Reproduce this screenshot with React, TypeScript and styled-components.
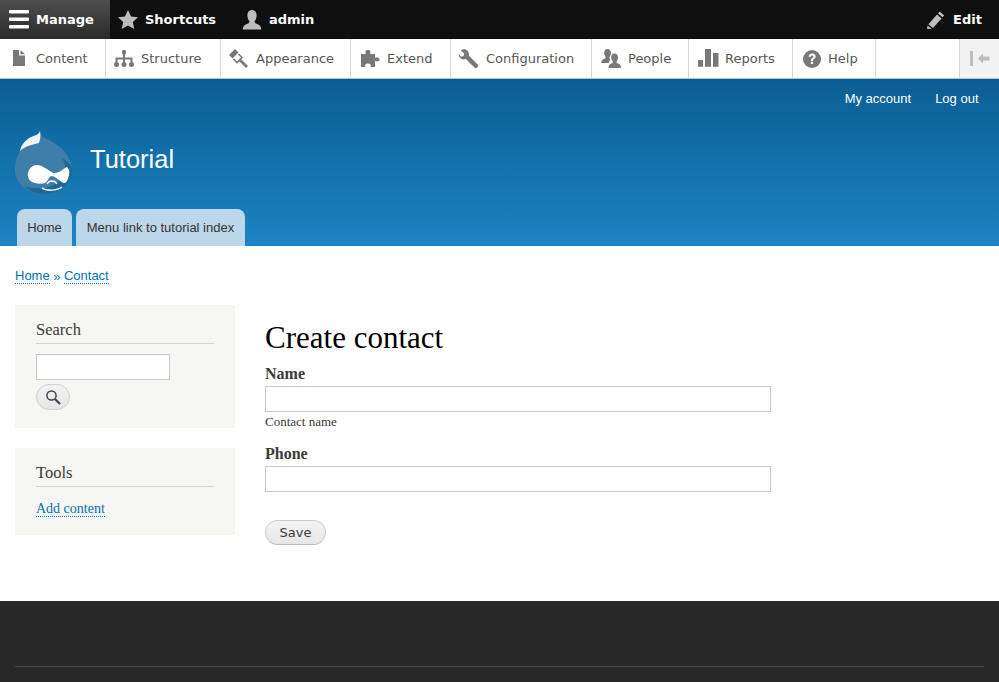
import styled, { createGlobalStyle } from "styled-components";

const GlobalStyle = createGlobalStyle`
    html, body { margin: 0; padding: 0; background: #fff; }
    * { box-sizing: border-box; }
`;

const uiFont = `"DejaVu Sans", sans-serif`;
const headerFont = `"Liberation Sans", Arial, sans-serif`;
const bodyFont = `"Liberation Serif", "Times New Roman", serif`;

const Page = styled.div`
    width: 999px;
    height: 682px;
    overflow: hidden;
    display: flex;
    flex-direction: column;
`;

/* 黒いツールバー */
const TopBar = styled.div`
    height: 39px;
    background: #0f0f0f;
    display: flex;
    align-items: stretch;
`;

const TopItem = styled.a<{ $active?: boolean; $width: number }>`
    width: ${(p) => p.$width}px;
    display: flex;
    align-items: center;
    gap: 7px;
    padding-left: ${(p) => (p.$active ? 9 : 8)}px;
    color: #fff;
    font: bold 13px ${uiFont};
    background: ${(p) => (p.$active ? "linear-gradient(to bottom, #4e4e4e, #2a2a2a)" : "transparent")};
`;

const TopEdit = styled(TopItem)`
    margin-left: auto;
    padding-left: 0;
    gap: 8px;
`;

const Tray = styled.div`
    height: 40px;
    background: #fff;
    border-bottom: 1px solid #bfbfbf;
    display: flex;
    align-items: stretch;
`;

const TrayItem = styled.a<{ $width: number; $gap?: number }>`
    width: ${(p) => p.$width}px;
    display: flex;
    align-items: center;
    gap: ${(p) => p.$gap ?? 7}px;
    padding-left: 8px;
    border-right: 1px solid #d9d9d9;
    color: #565656;
    font: 13px ${uiFont};
`;

const TrayToggle = styled.div`
    margin-left: auto;
    width: 40px;
    background: #f2f2f2;
    border-left: 1px solid #d9d9d9;
    display: flex;
    align-items: center;
    justify-content: center;
`;

/* サイトヘッダー */
const Header = styled.header`
    height: 167px;
    background: linear-gradient(to bottom, #0a5d93, #1d84c3);
    display: flex;
    flex-direction: column;
    font-family: ${headerFont};
`;

const SecondaryMenu = styled.nav`
    height: 38px;
    padding-right: 20.5px;
    display: flex;
    justify-content: flex-end;
    align-items: center;
    gap: 24px;
    font-size: 13px;
    color: #fff;
`;

const Branding = styled.div`
    height: 92px;
    padding: 13px 0 0 15px;
    display: flex;
    align-items: flex-start;
    gap: 17px;
`;

const SiteName = styled.div`
    margin-top: 13px;
    font-size: 25.5px;
    line-height: 32px;
    color: #fff;
`;

const Tabs = styled.nav`
    height: 37px;
    padding-left: 17px;
    display: flex;
    gap: 4px;
`;

const Tab = styled.a<{ $width: number }>`
    width: ${(p) => p.$width}px;
    display: flex;
    align-items: center;
    justify-content: center;
    background: #bcd7ea;
    border-radius: 8px 8px 0 0;
    color: #333;
    font-size: 13px;
`;

const Main = styled.main`
    flex: 1;
    padding: 20px 15px 0;
    background: #fff;
    font-family: ${bodyFont};
`;

const Breadcrumb = styled.div`
    height: 20px;
    display: flex;
    align-items: center;
    gap: 3.5px;
    font: 13px ${headerFont};
    color: #1f6fa8;
`;

const Link = styled.a`
    color: #0071b3;
    border-bottom: 1px dotted #0071b3;
    line-height: 14px;
`;

const Columns = styled.div`
    margin-top: 19px;
    display: flex;
    align-items: flex-start;
    gap: 30px;
`;

const Sidebar = styled.aside`
    width: 220px;
    display: flex;
    flex-direction: column;
    gap: 20px;
`;

const Block = styled.section<{ $height: number }>`
    height: ${(p) => p.$height}px;
    padding: 15px 21px 0;
    background: #f6f6f2;
`;

const BlockTitle = styled.h2`
    margin: 0;
    height: 24px;
    border-bottom: 1px solid #d6d6d6;
    font: normal 16.5px/20px ${bodyFont};
    color: #3b3b3b;
`;

const SearchInput = styled.input`
    display: block;
    width: 134px;
    height: 26px;
    margin-top: 10px;
    border: 1px solid #c8c8c8;
    background: #fff;
`;

const SearchButton = styled.button`
    display: flex;
    align-items: center;
    justify-content: center;
    width: 34px;
    height: 26px;
    margin-top: 4px;
    padding: 0;
    border: 1px solid #d0d0d0;
    border-radius: 13px;
    background: linear-gradient(to bottom, #f3f3f3, #e6e6e6);
`;

const ToolLink = styled(Link)`
    display: inline-block;
    margin-top: 15px;
    font: 14px/14px ${bodyFont};
`;

const Content = styled.div`
    width: 506px;
`;

const Title = styled.h1`
    margin: 17px 0 0;
    font: normal 31px/32px ${bodyFont};
    color: #000;
`;

const Field = styled.div<{ $gap: number }>`
    margin-top: ${(p) => p.$gap}px;
`;

const Label = styled.label`
    display: block;
    height: 21px;
    font: bold 16px/18px ${bodyFont};
    color: #3b3b3b;
`;

const TextInput = styled.input`
    display: block;
    width: 506px;
    height: 26px;
    border: 1px solid #c8c8c8;
    background: #fff;
`;

const Hint = styled.div`
    margin-top: 3px;
    font: 13px/14px ${bodyFont};
    color: #3b3b3b;
`;

const SaveButton = styled.button`
    display: block;
    width: 61px;
    height: 25px;
    margin-top: 28px;
    padding: 0;
    border: 1px solid #cfcfcf;
    border-bottom-color: #b8b8b8;
    border-radius: 13px;
    background: linear-gradient(to bottom, #f5f5f5, #e6e6e6);
    color: #3a3a3a;
    font: 13px ${uiFont};
`;

const Footer = styled.footer`
    height: 81px;
    padding: 65px 15px 0;
    background: #292929;
`;

const FooterRule = styled.div`
    border-top: 1px solid #474747;
`;

const Icon = styled.svg`
    flex: none;
    display: block;
    overflow: visible;
`;

const grey = "#787878";

const DrupalLogo = () => (
    <Icon width="58" height="66" viewBox="0 0 58 66">
        <path d="M25 1C26 6 29 8 34 10C47 16 57 27 57 40C57 53 45 64 29 64C12 64 0 53 0 40C0 31 3 23 7 18C14 12 24 9 25 1Z" fill="#3f7ea9" />
        <path d="M47 28C55 33 57 37 57 40C57 53 45 64 29 64C21 64 14 61 9 56C22 60 40 60 48 46C51 41 51 34 47 28Z" fill="#1f6797" />
        <path d="M25 1C26 7 25 10 24 13C19 14 10 16 5 21C6 15 10 11 14 8C20 5 24 5 25 1Z" fill="#eef4f8" />
        <path d="M13 43C14 38 18 35 22 35C27 35 29 38 32 39C35 41 37 43 40 43C44 43 48 39 52 37C54 39 55 42 54 45C53 49 52 52 50 53C47 53 46 51 44 50C41 48 39 46 36 46C34 47 33 51 30 53C27 54 23 54 20 53C15 52 12 48 13 43Z" fill="#fff" />
        <path d="M27 58C31 61 42 61 47 57" fill="none" stroke="#fff" strokeWidth="1.5" />
        <path d="M32 54C34 50 40 50 42 54" fill="none" stroke="#fff" strokeWidth="1.3" />
    </Icon>
);

const App = () => {
    return (
        <Page>
            <GlobalStyle />
            <TopBar>
                <TopItem $active $width={110}>
                    <Icon width="20" height="19" viewBox="0 0 20 19">
                        <g fill="#fff">
                            <rect y="0" width="20" height="3.6" rx="1" />
                            <rect y="7.4" width="20" height="3.6" rx="1" />
                            <rect y="15" width="20" height="3.6" rx="1" />
                        </g>
                    </Icon>
                    Manage
                </TopItem>
                <TopItem $width={124}>
                    <Icon width="20" height="19" viewBox="0 0 20 19">
                        <path d="M10 0L13 6.6L20 7.3L14.8 12L16.3 19L10 15.4L3.7 19L5.2 12L0 7.3L7 6.6Z" fill="#bdbdbd" />
                    </Icon>
                    Shortcuts
                </TopItem>
                <TopItem $width={100}>
                    <Icon width="20" height="20" viewBox="0 0 20 20">
                        <path d="M10 0C13 0 14.6 2.4 14.6 5.4C14.6 8 13.6 10 12.6 11C12.6 13 14 13.6 16 14.4C18 15.2 19 16.2 19.4 19.6H0.6C1 16.2 2 15.2 4 14.4C6 13.6 7.4 13 7.4 11C6.4 10 5.4 8 5.4 5.4C5.4 2.4 7 0 10 0Z" fill="#bdbdbd" />
                    </Icon>
                    admin
                </TopItem>
                <TopEdit $width={72}>
                    <Icon width="18" height="18" viewBox="0 0 18 18">
                        <path d="M12.6 0.6L17.2 4.4L15.6 6.2L11 2.4ZM10 3.6L14.6 7.4L6 17L1.4 13.2Z M0.6 14.4L4.8 17.8L0 18Z" fill="#bdbdbd" />
                    </Icon>
                    Edit
                </TopEdit>
            </TopBar>
            <Tray>
                <TrayItem $width={106} $gap={8}>
                    <Icon width="20" height="19" viewBox="0 0 20 19">
                        <path d="M5 1H11V6.5H17V17H5ZM12.5 1L17 5.2H12.5Z" fill={grey} />
                    </Icon>
                    Content
                </TrayItem>
                <TrayItem $width={115}>
                    <Icon width="20" height="19" viewBox="0 0 20 19">
                        <g fill={grey}>
                            <rect x="8" y="1" width="4" height="4.5" rx="1.4" />
                            <rect x="9" y="4" width="2" height="10" />
                            <path d="M1.5 14V8.5H18.5V14H16.5V10.5H3.5V14Z" />
                            <circle cx="2.5" cy="15.5" r="2.5" />
                            <circle cx="10" cy="15.5" r="2.5" />
                            <circle cx="17.5" cy="15.5" r="2.5" />
                        </g>
                    </Icon>
                    Structure
                </TrayItem>
                <TrayItem $width={130}>
                    <Icon width="20" height="19" viewBox="0 0 20 19">
                        <path d="M6 0L0 6L3.5 9.5L9.5 3.5Z" fill={grey} />
                        <path d="M4.5 10L8 13.5L13 8.5L9.5 5" fill="none" stroke={grey} strokeWidth="1.6" />
                        <path d="M11 11L18 18" stroke={grey} strokeWidth="2.8" />
                    </Icon>
                    Appearance
                </TrayItem>
                <TrayItem $width={100} $gap={8}>
                    <Icon width="20" height="19" viewBox="-1 0 20 19">
                        <path d="M1 5H6C5 3 5.5 1 8 1C10.5 1 11 3 10 5H15V9C17 8 19.5 8.5 19.5 10.5C19.5 12.5 17 13 15 12V18H10.5C11.5 16 10.5 14.5 8 14.5C5.5 14.5 4.5 16 5.5 18H1Z" fill={grey} />
                    </Icon>
                    Extend
                </TrayItem>
                <TrayItem $width={141}>
                    <Icon width="20" height="19" viewBox="0 0 20 19">
                        <path d="M6.5 0.4C4.9 0 3 0.4 1.8 1.6L5.2 4.4L4.6 7L2 7.7L0 4.6C-0.5 7 0.6 9.4 3 10.2C4.4 10.6 5.6 10.3 6.6 9.8L15.4 18.4C16.4 19.2 17.6 19 18.4 18.2C19.2 17.4 19.4 16.2 18.6 15.4L9.8 6.4C10.3 4 9.4 1.2 6.5 0.4Z" fill={grey} />
                    </Icon>
                    Configuration
                </TrayItem>
                <TrayItem $width={97} $gap={8}>
                    <Icon width="20" height="19" viewBox="-1 0 20 19">
                        <path d="M6.5 0C9 0 10 2 10 4C10 5.6 9.2 7.2 8.5 8C8.4 9.6 8.8 10 9.5 10.5C8.5 11.6 8.2 12.5 8 14H0.3C0.5 11.5 1 10.8 2.5 10.2C4 9.6 4.8 9.2 4.7 8C4 7.2 3.2 5.6 3.2 4C3.2 2 4.2 0 6.5 0Z" fill={grey} />
                        <path d="M13.5 4.5C16 4.5 17 6.5 17 8.5C17 10 16.2 11.6 15.5 12.4C15.5 14 16.5 14.4 17.5 14.8C19 15.4 19.7 16 20 19H7.5C7.8 16 8.5 15.4 10 14.8C11 14.4 12 14 12 12.4C11 11.6 10.2 10 10.2 8.5C10.2 6.5 11 4.5 13.5 4.5Z" fill={grey} />
                    </Icon>
                    People
                </TrayItem>
                <TrayItem $width={104} $gap={8}>
                    <Icon width="20" height="19" viewBox="0 0 20 19">
                        <path d="M1 11H6V17.7H1ZM8 0H14V17.7H8ZM16 4H21.5V17.7H16Z" fill={grey} />
                    </Icon>
                    Reports
                </TrayItem>
                <TrayItem $width={83}>
                    <Icon width="20" height="19" viewBox="-1 0 20 19">
                        <circle cx="10" cy="10" r="9" fill={grey} />
                        <path d="M6.6 7.7C6.8 5.5 8.2 4.5 10.1 4.5C12.2 4.5 13.6 5.7 13.6 7.5C13.6 8.9 12.8 9.5 11.9 10.1C11.2 10.6 11 11 11 11.9H8.9C8.9 10.5 9.3 9.7 10.3 9C11 8.5 11.4 8.2 11.4 7.6C11.4 6.9 10.9 6.5 10.1 6.5C9.3 6.5 8.8 7 8.7 7.9ZM8.8 12.8H11.1V15.1H8.8Z" fill="#fff" />
                    </Icon>
                    Help
                </TrayItem>
                <TrayToggle>
                    <Icon width="20" height="15" viewBox="0 0 20 15">
                        <path d="M0 0H3V15H0ZM8 7.5L13 2.5V5.5H19.5V9.5H13V12.5Z" fill="#bdbdbd" />
                    </Icon>
                </TrayToggle>
            </Tray>
            <Header>
                <SecondaryMenu>
                    <span>My account</span>
                    <span>Log out</span>
                </SecondaryMenu>
                <Branding>
                    <DrupalLogo />
                    <SiteName>Tutorial</SiteName>
                </Branding>
                <Tabs>
                    <Tab $width={55}>Home</Tab>
                    <Tab $width={169}>Menu link to tutorial index</Tab>
                </Tabs>
            </Header>
            <Main>
                <Breadcrumb>
                    <Link>Home</Link> » <Link>Contact</Link>
                </Breadcrumb>
                <Columns>
                    <Sidebar>
                        <Block $height={123}>
                            <BlockTitle>Search</BlockTitle>
                            <SearchInput type="text" />
                            <SearchButton aria-label="Search">
                                <Icon width="16" height="16" viewBox="0 0 16 16">
                                    <circle cx="6.5" cy="6.5" r="4.6" fill="none" stroke="#444" strokeWidth="1.5" />
                                    <path d="M10 10L15 15" stroke="#444" strokeWidth="2.2" />
                                </Icon>
                            </SearchButton>
                        </Block>
                        <Block $height={87}>
                            <BlockTitle>Tools</BlockTitle>
                            <ToolLink>Add content</ToolLink>
                        </Block>
                    </Sidebar>
                    <Content>
                        <Title>Create contact</Title>
                        <Field $gap={11}>
                            <Label>Name</Label>
                            <TextInput type="text" />
                            <Hint>Contact name</Hint>
                        </Field>
                        <Field $gap={16}>
                            <Label>Phone</Label>
                            <TextInput type="text" />
                        </Field>
                        <SaveButton>Save</SaveButton>
                    </Content>
                </Columns>
            </Main>
            <Footer>
                <FooterRule />
            </Footer>
        </Page>
    );
}

export default App;
